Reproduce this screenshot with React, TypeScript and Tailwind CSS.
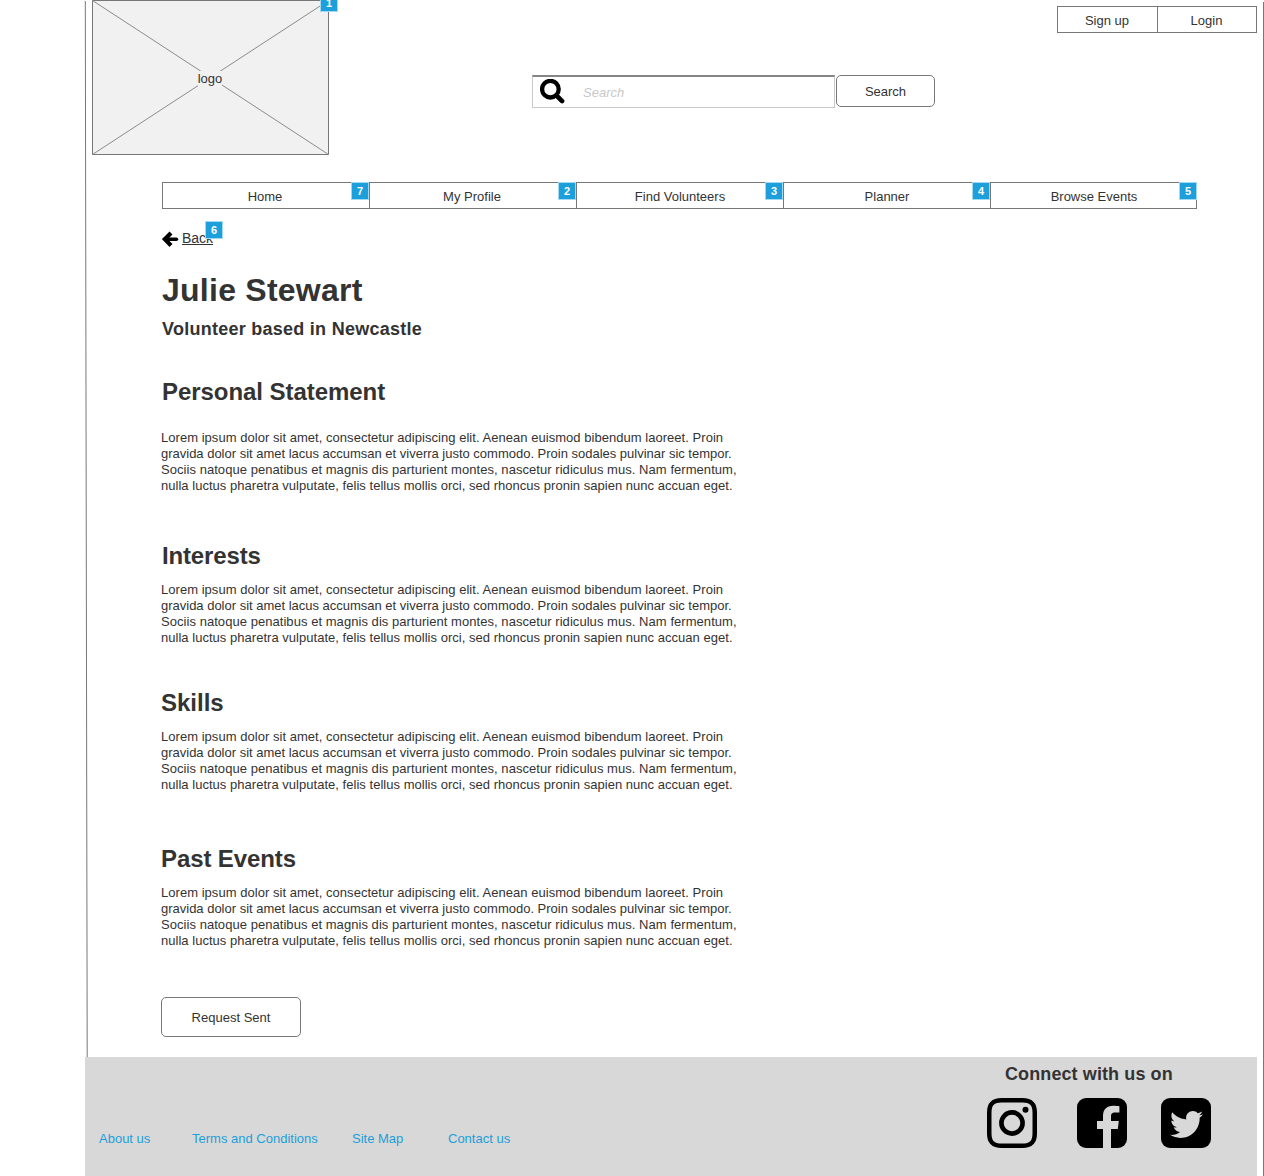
import { FaTwitter } from "react-icons/fa";

const lorem = [
  { text: "Lorem ipsum dolor sit amet, consectetur adipiscing elit. Aenean euismod bibendum laoreet. Proin", spacing: "tracking-[0.037px]" },
  { text: "gravida dolor sit amet lacus accumsan et viverra justo commodo. Proin sodales pulvinar sic tempor.", spacing: "tracking-[-0.009px]" },
  { text: "Sociis natoque penatibus et magnis dis parturient montes, nascetur ridiculus mus. Nam fermentum,", spacing: "tracking-[0.05px]" },
  { text: "nulla luctus pharetra vulputate, felis tellus mollis orci, sed rhoncus pronin sapien nunc accuan eget.", spacing: "tracking-[0.028px]" },
];

function Badge({ n, place }: { n: number; place: string }) {
  return (
    <span className={`absolute z-10 flex h-[18px] w-[18px] items-center justify-center border border-[#a3daf2] bg-[#1c9fda] text-[11px] leading-none font-bold text-white ${place}`}>
      {n}
    </span>
  );
}

function Section({ title, heading }: { title: string; heading: string }) {
  return (
    <section>
      <h2 className={`text-[24px] leading-[28px] font-bold whitespace-nowrap ${heading}`}>{title}</h2>
      <div className="-ml-px text-[13px] leading-[16px] whitespace-nowrap">
        {lorem.map(({ text, spacing }) => (
          <p key={text} className={spacing}>{text}</p>
        ))}
      </div>
    </section>
  );
}

function Logo() {
  return (
    <div className="relative flex h-[155px] w-[237px] items-center justify-center bg-[#f1f1f1]">
      <svg className="absolute inset-0" width="237" height="155" fill="none" stroke="#777">
        <path d="M.5.5h236v154H.5z" />
        <path d="M.5.5l236 154M236.5.5L.5 154.5" stroke="#8b8b8b" />
      </svg>
      <span className="relative mt-[3px] -ml-px bg-[#f1f1f1] pt-px pb-px leading-[14px]">logo</span>
      <Badge n={1} place="-top-1.5 left-[228px]" />
    </div>
  );
}

function Header() {
  return (
    <header className="flex h-[182px] items-start pl-[7px]">
      <Logo />
      <div className="mt-[75px] ml-[203px] flex">
        <div className="flex h-[33px] w-[303px] items-center border border-t-2 border-[#c9c9c9] border-t-[#858585] pl-[7px]">
          <svg className="-mt-px" width="25" height="25" viewBox="0 0 25 25" fill="none" stroke="#000">
            <circle cx="10.4" cy="10.2" r="8.3" strokeWidth="4.3" />
            <path d="M16.5 16.5l5.6 5.6" strokeWidth="4.6" strokeLinecap="round" />
          </svg>
          <span className="mt-0.5 ml-[18px] text-[#c8c8c8] italic">Search</span>
        </div>
        <button className="ml-px h-8 w-[99px] rounded-[5px] border border-[#777] pt-px">Search</button>
      </div>
      <div className="mt-1.5 ml-[122px] flex h-[27px] w-[200px] border border-[#777]">
        <button className="w-[100px] border-r border-[#777] pt-0.5 pr-px">Sign up</button>
        <button className="flex-1 pt-0.5 pr-px">Login</button>
      </div>
    </header>
  );
}

const nav = [
  { label: "Home", n: 7, pad: "pr-0.5" },
  { label: "My Profile", n: 2, pad: "pr-0.5" },
  { label: "Find Volunteers", n: 3, pad: "" },
  { label: "Planner", n: 4, pad: "" },
  { label: "Browse Events", n: 5, pad: "" },
];

function Footer() {
  return (
    <footer className="flex h-[119px] w-[1172px] bg-[#d8d8d8]">
      <nav className="mt-[73px] flex h-[18px] w-[902px] pl-3.5 leading-[18px] text-[#1c9fda]">
        <a className="w-[93px]">About us</a>
        <a className="w-[160px]">Terms and Conditions</a>
        <a className="w-24">Site Map</a>
        <a>Contact us</a>
      </nav>
      <div>
        <h3 className="mt-1.5 ml-[18px] text-[18px] leading-[22px] font-bold tracking-[0.1px] whitespace-nowrap">Connect with us on</h3>
        <div className="mt-[13px] flex">
          <svg width="50" height="50" viewBox="0 0 50 50" fill="none" stroke="#000">
            <path d="M14.5 2.25h21c8.5 0 12.25 3.75 12.25 12.25v21c0 8.5-3.75 12.25-12.25 12.25h-21C6 47.75 2.25 44 2.25 35.5v-21C2.25 6 6 2.25 14.5 2.25z" strokeWidth="4.5" />
            <circle cx="25" cy="25" r="10.6" strokeWidth="4.6" />
            <circle cx="38.5" cy="11.8" r="3" fill="#000" stroke="none" />
          </svg>
          <svg className="ml-10" width="50" height="50" viewBox="0 0 50 50">
            <rect width="50" height="50" rx="9" fill="#000" />
            <path d="M26 50V31h-6v-8h6v-5c0-6.5 4-10.2 10-10.2 2.8 0 5 .2 6.4.4v6.4H38c-3.2 0-4 1.6-4 4V23h7.8l-1 8H34v19z" fill="#d8d8d8" />
          </svg>
          <div className="ml-[34px] flex h-[50px] w-[50px] items-center justify-center rounded-[9px] bg-black">
            <FaTwitter className="mt-0.5 h-[33px] w-[33px] text-[#d8d8d8]" />
          </div>
        </div>
      </div>
    </footer>
  );
}

export default function App() {
  return (
    <div className="relative h-[1176px] w-[1264px] overflow-hidden bg-white pl-[85px] font-['Liberation_Sans',Arial,sans-serif] text-[13px] text-[#333]">
      <svg className="pointer-events-none absolute inset-0" width="1264" height="1176" fill="none">
        <path d="M85.3 1L87.2 1057" stroke="#777" />
        <path d="M1263.5 2V1176" stroke="#777" />
      </svg>
      <Header />
      <main className="h-[875px] pl-[77px]">
        <nav className="flex h-[27px] w-[1035px] border border-[#777]">
          {nav.map(({ label, n, pad }) => (
            <a key={n} className={`relative flex w-[207px] shrink-0 items-center justify-center border-r border-[#777] pt-0.5 last:w-[206px] last:border-r-0 ${pad}`}>
              {label}
              <Badge n={n} place="-top-px right-0" />
            </a>
          ))}
        </nav>
        <div className="relative mt-[21px] flex h-[18px] w-[70px] items-center text-[14px]">
          <svg width="17" height="18" viewBox="0 0 17 18" fill="none" stroke="#000" strokeLinecap="round">
            <path d="M9 3L2.8 9.2 9 15.4" strokeWidth="4.2" strokeLinecap="butt" />
            <path d="M4 9.2h10.4" strokeWidth="3.6" />
          </svg>
          <span className="-mt-0.5 ml-[3px] underline">Back</span>
          <Badge n={6} place="-top-[9px] left-[43px]" />
        </div>
        <h1 className="mt-[23px] text-[32px] leading-[38px] font-bold tracking-[0.25px]">Julie Stewart</h1>
        <p className="mt-[9px] text-[18px] leading-[22px] font-bold tracking-[0.26px]">Volunteer based in Newcastle</p>
        <div className="mt-[38px]">
          <Section title="Personal Statement" heading="mb-[24px] tracking-[-0.05px]" />
          <div className="h-12" />
          <Section title="Interests" heading="mb-[12px] tracking-[-0.15px]" />
          <div className="h-[43px]" />
          <Section title="Skills" heading="mb-[12px] -ml-px" />
          <div className="h-[52px]" />
          <Section title="Past Events" heading="mb-[12px] -ml-px tracking-[-0.1px]" />
        </div>
        <button className="mt-12 -ml-px block h-10 w-[140px] rounded-[5px] border border-[#777] pt-0.5">Request Sent</button>
      </main>
      <Footer />
    </div>
  );
}
